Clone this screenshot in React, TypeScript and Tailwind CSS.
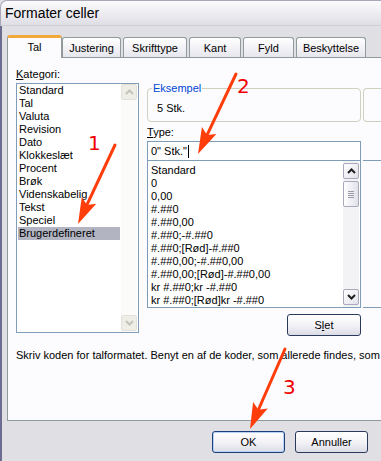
import React from "react";

const SANS = "font-['Liberation_Sans',Arial,sans-serif]";

function Chev({ dir, color }: { dir: "up" | "down"; color: string }) {
  return (
    <svg width="9" height="6" viewBox="0 0 9 6">
      <path
        d={dir === "up" ? "M1 5 L4.5 1.5 L8 5" : "M1 1 L4.5 4.5 L8 1"}
        fill="none"
        stroke={color}
        strokeWidth="2"
      />
    </svg>
  );
}

function SbBtn({ dir, disabled }: { dir: "up" | "down"; disabled?: boolean }) {
  return disabled ? (
    <div className="w-[16px] h-[16px] rounded-[2px] border border-[#e2e1da] bg-[#eeede6] flex items-center justify-center">
      <Chev dir={dir} color="#c3c3bb" />
    </div>
  ) : (
    <div className="w-[16px] h-[16px] rounded-[2px] border border-[#a9a9bb] bg-gradient-to-br from-[#ffffff] to-[#e1e1ea] flex items-center justify-center">
      <Chev dir={dir} color="#202020" />
    </div>
  );
}

function Arrow({ x1, y1, x2, y2 }: { x1: number; y1: number; x2: number; y2: number }) {
  const dx = x2 - x1;
  const dy = y2 - y1;
  const len = Math.hypot(dx, dy);
  const ux = dx / len;
  const uy = dy / len;
  const nx = -uy;
  const ny = ux;
  const hl = 26;
  const hw = 8;
  const notch = 5;
  const bx = x2 - ux * hl;
  const by = y2 - uy * hl;
  const mx = x2 - ux * (hl - notch);
  const my = y2 - uy * (hl - notch);
  const pts = [
    [x2, y2],
    [bx + nx * hw, by + ny * hw],
    [mx, my],
    [bx - nx * hw, by - ny * hw],
  ]
    .map((p) => p.join(","))
    .join(" ");
  return (
    <g>
      <line x1={x1} y1={y1} x2={mx} y2={my} stroke="#ff3d0a" strokeWidth="3" strokeLinecap="round" />
      <polygon points={pts} fill="#ff3d0a" />
    </g>
  );
}

const categories = [
  "Standard",
  "Tal",
  "Valuta",
  "Revision",
  "Dato",
  "Klokkeslæt",
  "Procent",
  "Brøk",
  "Videnskabelig",
  "Tekst",
  "Speciel",
  "Brugerdefineret",
];

const formats = [
  "Standard",
  "0",
  "0,00",
  "#.##0",
  "#.##0,00",
  "#.##0;-#.##0",
  "#.##0;[Rød]-#.##0",
  "#.##0,00;-#.##0,00",
  "#.##0,00;[Rød]-#.##0,00",
  "kr #.##0;kr -#.##0",
  "kr #.##0;[Rød]kr -#.##0",
];

function Tab({ label, active, w, ml }: { label: string; active?: boolean; w: string; ml: string }) {
  if (active) {
    return (
      <div
        className={`${w} ${ml} shrink-0 h-[23px] relative z-10 bg-[#fcfcfe] border-x border-[#919b9c] rounded-t-[3px] border-t-[3px] border-t-[#f3a93a] flex items-center justify-center text-[11px] text-black pb-[2px]`}
      >
        {label}
      </div>
    );
  }
  return (
    <div
      className={`${w} ${ml} shrink-0 h-[20px] mb-[1px] bg-gradient-to-b from-[#ffffff] to-[#e6e6ee] border-x border-t border-[#919b9c] rounded-t-[3px] flex items-center justify-center text-[11px] text-black pt-[1px]`}
    >
      {label}
    </div>
  );
}

function XPButton({ children, w, def }: { children: React.ReactNode; w: string; def?: boolean }) {
  return (
    <div
      className={`${w} shrink-0 h-[22px] rounded-[3px] border ${def ? "border-[#1c3f7a] shadow-[inset_0_0_0_1px_#b9d1f4]" : "border-[#2b3a5c]"} bg-gradient-to-b from-[#ffffff] via-[#f3f3f7] to-[#dcdce6] flex items-center justify-center text-[11px] text-black`}
    >
      {children}
    </div>
  );
}

export default function App() {
  return (
    <div className={`w-[381px] h-[461px] overflow-hidden relative bg-[#e0dfe3] ${SANS}`}>
      {/* Title bar */}
      <div className="h-[26px] rounded-tl-[7px] border-t border-l border-[#a8a8b8] border-b border-b-[#cfcfd8] bg-gradient-to-b from-[#fbfbfc] via-[#ededf1] to-[#dedee5] flex items-start pl-[4px] pt-[3px]">
        <span className="text-[14px] leading-[18px] text-black">Formater celler</span>
      </div>

      <div className="flex h-[435px]">
        <div className="w-[2px] shrink-0 bg-[#6c6c8e]" />
        <div className="flex-1 min-w-0 pl-[5px] pt-[9px] flex flex-col">
          {/* Tabs */}
          <div className="flex items-end h-[23px] -mb-[1px] relative z-10">
            <Tab label="Tal" active w="w-[55px]" ml="ml-0" />
            <Tab label="Justering" w="w-[59px]" ml="ml-0" />
            <Tab label="Skrifttype" w="w-[64px]" ml="ml-[2px]" />
            <Tab label="Kant" w="w-[52px]" ml="ml-[2px]" />
            <Tab label="Fyld" w="w-[51px]" ml="ml-[2px]" />
            <Tab label="Beskyttelse" w="w-[70px]" ml="ml-[2px]" />
          </div>

          {/* Panel */}
          <div className="w-[420px] shrink-0 h-[364px] border border-[#919b9c] bg-[#fcfcfe] flex flex-col text-[11px] leading-[13px] text-black">
            <div className="flex pl-[8px]">
              {/* Left column */}
              <div className="w-[123px] shrink-0 pt-[10px] flex flex-col">
                <div className="h-[13px]">
                  <span className="underline">K</span>ategori:
                </div>
                <div className="mt-[2px] h-[250px] border border-[#7f9db9] bg-white flex">
                  <div className="flex-1 ml-[1px] mr-[1px] flex flex-col">
                    {categories.map((c) => (
                      <div
                        key={c}
                        className={`h-[13px] pl-[1px] whitespace-nowrap ${c === "Brugerdefineret" ? "bg-[#b2b4c2]" : ""}`}
                      >
                        {c}
                      </div>
                    ))}
                  </div>
                  <div className="w-[16px] mr-[1px] pb-[1px] bg-[#fbfbf9] flex flex-col justify-between">
                    <SbBtn dir="up" disabled />
                    <SbBtn dir="down" disabled />
                  </div>
                </div>
              </div>

              {/* Right column */}
              <div className="w-[214px] shrink-0 ml-[8px] flex flex-col">
                <div className="mt-[30px] h-[34px] relative border border-[#d0d0bf] rounded-[4px] pl-[9px] pt-[13px]">
                  <span className="absolute -top-[7px] left-[4px] px-[1px] bg-[#fcfcfe] text-[#0046d5]">Eksempel</span>
                  5 Stk.
                </div>
                <div className="mt-[4px] h-[13px]">
                  <span className="underline">T</span>ype:
                </div>
                <div className="mt-[2px] h-[20px] border border-[#7f9db9] bg-white pl-[3px] flex items-center whitespace-nowrap">
                  <span>0" Stk."</span>
                  <span className="inline-block w-[1px] h-[13px] bg-black ml-[1px]" />
                </div>
                <div className="h-[147px] border border-t-0 border-[#7f9db9] bg-white flex">
                  <div className="flex-1 pl-[3px] pt-[3px] flex flex-col">
                    {formats.map((f) => (
                      <div key={f} className="h-[13px] whitespace-nowrap">
                        {f}
                      </div>
                    ))}
                  </div>
                  <div className="w-[16px] mr-[1px] py-[2px] bg-[#f3f3f6] flex flex-col">
                    <SbBtn dir="up" />
                    <div className="mt-[2px] w-[16px] h-[26px] rounded-[2px] border border-[#a9a9bb] bg-gradient-to-r from-[#ffffff] to-[#e1e1ea] flex flex-col items-center justify-center gap-[1px]">
                      <div className="w-[6px] h-[1px] bg-[#9a9aa8]" />
                      <div className="w-[6px] h-[1px] bg-[#9a9aa8]" />
                      <div className="w-[6px] h-[1px] bg-[#9a9aa8]" />
                      <div className="w-[6px] h-[1px] bg-[#9a9aa8]" />
                    </div>
                    <div className="flex-1" />
                    <SbBtn dir="down" />
                  </div>
                </div>
                <div className="mt-[6px] self-end">
                  <XPButton w="w-[74px]">
                    S<span className="underline">l</span>et
                  </XPButton>
                </div>
              </div>

              {/* Cut-off column on the right */}
              <div className="w-[40px] shrink-0 ml-[2px] flex flex-col">
                <div className="mt-[30px] h-[34px] border-y border-l border-[#d0d0bf] rounded-l-[4px]" />
                <div className="mt-[38px] h-[148px] border-y border-[#7f9db9]" />
              </div>
            </div>

            <div className="mt-[13px] pl-[8px] whitespace-nowrap">
              Skriv koden for talformatet. Benyt en af de koder, som allerede findes, som udgangspunkt.
            </div>
          </div>

          {/* Bottom buttons */}
          <div className="mt-[10px] flex pl-[205px]">
            <XPButton w="w-[73px]" def>
              OK
            </XPButton>
            <div className="ml-[10px]">
              <XPButton w="w-[73px]">Annuller</XPButton>
            </div>
          </div>
        </div>
      </div>

      {/* Annotation overlay */}
      <svg className="absolute left-0 top-0 pointer-events-none" width="381" height="461">
        <Arrow x1={115} y1={145} x2={78} y2={224} />
        <Arrow x1={236} y1={74} x2={198} y2={154} />
        <Arrow x1={285} y1={349} x2={250} y2={429} />
      </svg>
      <span className="absolute left-[88px] top-[133px] text-[20px] leading-none text-[#f00000] font-['DejaVu_Sans',sans-serif]">1</span>
      <span className="absolute left-[237px] top-[76px] text-[20px] leading-none text-[#f00000] font-['DejaVu_Sans',sans-serif]">2</span>
      <span className="absolute left-[283px] top-[377px] text-[20px] leading-none text-[#f00000] font-['DejaVu_Sans',sans-serif]">3</span>
    </div>
  );
}
